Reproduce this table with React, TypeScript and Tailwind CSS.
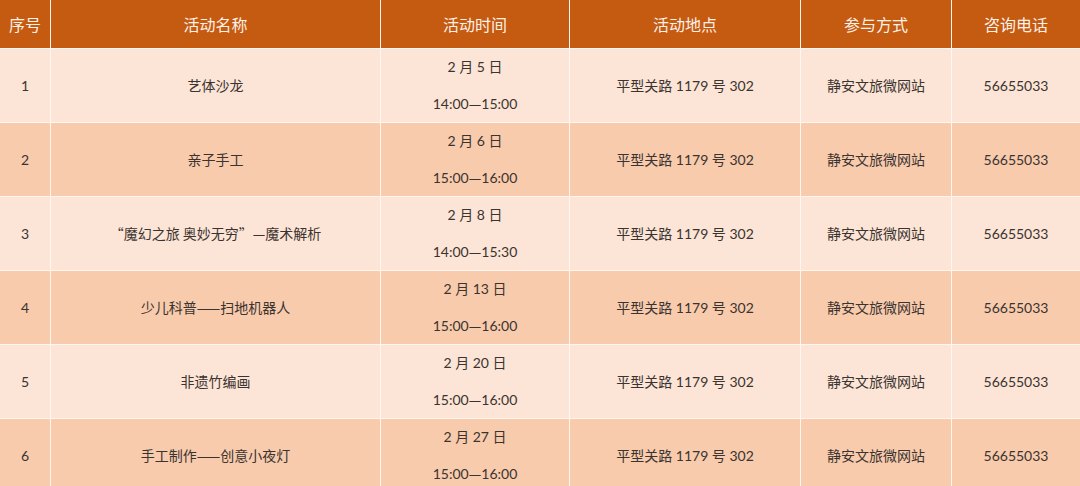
import React from "react";

const rows = [
  { n: "1", name: "艺体沙龙", date: "2 月 5 日", t1: "14:00", t2: "15:00" },
  { n: "2", name: "亲子手工", date: "2 月 6 日", t1: "15:00", t2: "16:00" },
  { n: "3", name: "“魔幻之旅 奥妙无穷”—魔术解析", date: "2 月 8 日", t1: "14:00", t2: "15:30" },
  { n: "4", name: "少儿科普——扫地机器人", date: "2 月 13 日", t1: "15:00", t2: "16:00" },
  { n: "5", name: "非遗竹编画", date: "2 月 20 日", t1: "15:00", t2: "16:00" },
  { n: "6", name: "手工制作——创意小夜灯", date: "2 月 27 日", t1: "15:00", t2: "16:00" },
];

const headers = ["序号", "活动名称", "活动时间", "活动地点", "参与方式", "咨询电话"];

const cellBase =
  "flex items-center justify-center text-[14px] text-[#3b3330] font-['Lato','Noto_Sans_CJK_SC',sans-serif]";

export default function App() {
  return (
    <div className="w-[1080px] h-[486px] overflow-hidden bg-[#fdf3ec]">
      <div className="grid grid-cols-[50px_329px_188px_230px_150px_1fr] grid-rows-[48px_repeat(6,73px)] gap-[1px] bg-[#fff6f0]">
        {headers.map((h) => (
          <div
            key={h}
            className="bg-[#c55a11] flex items-center justify-center text-[16px] text-[#fdf1e8] font-['Noto_Sans_CJK_SC',sans-serif]"
          >
            {h}
          </div>
        ))}
        {rows.map((r, i) => {
          const bg = i % 2 === 0 ? "bg-[#fce5d6]" : "bg-[#f8cbad]";
          return (
            <React.Fragment key={r.n}>
              <div className={`${cellBase} ${bg}`}>{r.n}</div>
              <div className={`${cellBase} ${bg} font-['Noto_Sans_CJK_SC',sans-serif]`}>{r.name}</div>
              <div className={`${cellBase} ${bg} flex-col`}>
                <div className="leading-[36px]">{r.date}</div>
                <div className="leading-[36px]">
                  {r.t1}
                  <span className="font-['Noto_Sans_CJK_SC',sans-serif]">—</span>
                  {r.t2}
                </div>
              </div>
              <div className={`${cellBase} ${bg}`}>平型关路 1179 号 302</div>
              <div className={`${cellBase} ${bg}`}>静安文旅微网站</div>
              <div className={`${cellBase} ${bg}`}>56655033</div>
            </React.Fragment>
          );
        })}
      </div>
    </div>
  );
}
